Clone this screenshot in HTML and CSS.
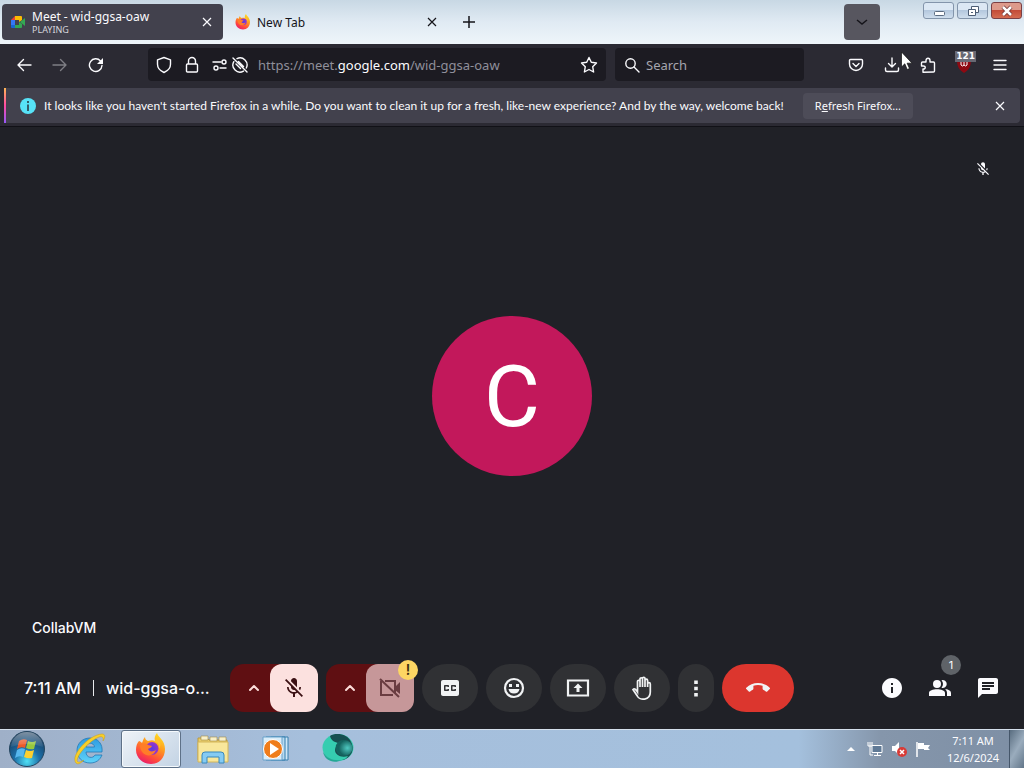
FILE: index.html
```html
<!DOCTYPE html>
<html lang="en">
<head>
<meta charset="utf-8">
<title>Meet - wid-ggsa-oaw</title>
<link rel="stylesheet" href="styles.css">
</head>
<body>
<svg class="defs" aria-hidden="true">
  <defs>
    <linearGradient id="ffo" x1=".8" y1="0" x2=".3" y2="1"><stop offset="0" stop-color="#ffe226"/><stop offset=".4" stop-color="#ff9a1f"/><stop offset=".75" stop-color="#ff4a3c"/><stop offset="1" stop-color="#e81b6d"/></linearGradient>
    <radialGradient id="ffp"><stop offset="0" stop-color="#5a3be0"/><stop offset="1" stop-color="#9a35c8"/></radialGradient>
    <radialGradient id="orb" cx=".5" cy=".85" r=".8"><stop offset="0" stop-color="#4fe0f5"/><stop offset=".45" stop-color="#1c6fa8"/><stop offset="1" stop-color="#173a5c"/></radialGradient>
    <linearGradient id="shine" x2="0" y2="1"><stop offset="0" stop-color="#fff" stop-opacity=".75"/><stop offset="1" stop-color="#fff" stop-opacity=".1"/></linearGradient>
    <linearGradient id="ie" x2="0" y2="1"><stop offset="0" stop-color="#2e9be0"/><stop offset="1" stop-color="#5fd3fa"/></linearGradient>
    <radialGradient id="teal" cx=".7" cy=".5"><stop offset="0" stop-color="#4fc8c0"/><stop offset="1" stop-color="#14635f"/></radialGradient>
    <symbol id="fox" viewBox="0 0 32 32">
      <path d="M4 8c1 0 2 1 3 2 1-2 1-4 3-6 0 2 1 3 3 4 3-1 5-1 7 0-1-3 0-6 2-8 1 4 8 7 8 16 0 9-6 15-14 15S1 25 1 17c0-4 1-7 3-9z" fill="url(#ffo)"/>
      <circle cx="17" cy="15.500" r="6.500" fill="url(#ffp)"/>
      <path d="M5 12c3-2 6-2 8 0l4 1c-1 2-3 2-4 3 1 3 5 3 8 1-2 6-9 7-13 3-2-2-3-5-3-8z" fill="#ff7d28"/>
      <path d="M19 9c4 0 6 3 5 7 3-4 1-10-3-10z" fill="#ffc22c"/>
    </symbol>
    <symbol id="micoff" viewBox="0 0 24 24"><path fill="currentColor" d="M19 11h-1.700c0 .74-.16 1.430-.43 2.050l1.230 1.230c.56-.98.9-2.090.9-3.280zm-4.020.17c0-.06.02-.11.02-.17V5c0-1.660-1.340-3-3-3S9 3.340 9 5v.18l5.980 5.990zM4.270 3L3 4.270l6.010 6.010V11c0 1.660 1.330 3 2.990 3 .22 0 .44-.03.65-.08l1.660 1.660c-.71.33-1.500.52-2.310.52-2.760 0-5.300-2.100-5.300-5.100H5c0 3.410 2.720 6.230 6 6.720V21h2v-3.280c.91-.13 1.770-.45 2.540-.9L19.730 21 21 19.730 4.270 3z"/></symbol>
    <symbol id="close" viewBox="0 0 16 16"><path d="M4 4l8 8M12 4l-8 8" stroke="currentColor" stroke-width="1.200"/></symbol>
  </defs>
</svg>

<header class="titlebar">
  <div class="tab tab-active">
    <svg class="i16" viewBox="0 0 16 16"><path d="M1 6l4-4v4z" fill="#ea4335"/><path d="M1 6h4v5H1z" fill="#3478f6"/><path d="M1 11h4v3H2q-1 0-1-1z" fill="#1967d2"/><path d="M5 2h6q1 0 1 1v3L9 8V6H5z" fill="#fbbc04"/><path d="M5 11h4V8l3 2v3q0 1-1 1H5zM10 8l5-4v8z" fill="#34a853"/></svg>
    <div class="tab-text"><span class="tab-title">Meet - wid-ggsa-oaw</span><span class="tab-sub">PLAYING</span></div>
    <button class="plain" aria-label="Close tab"><svg class="i16"><use href="#close"/></svg></button>
  </div>
  <div class="tab">
    <svg class="i16"><use href="#fox"/></svg>
    <div class="tab-text"><span class="tab-title">New Tab</span></div>
    <button class="plain" aria-label="Close tab"><svg class="i16"><use href="#close"/></svg></button>
  </div>
  <button class="plain new-tab" aria-label="New tab"><svg class="i16" viewBox="0 0 16 16"><path d="M8 2v12M2 8h12" stroke="currentColor" stroke-width="1.500"/></svg></button>
  <button class="all-tabs" aria-label="List all tabs"><svg class="i16" viewBox="0 0 16 16"><path d="M3 6l5 4 5-4" fill="none" stroke="currentColor" stroke-width="1.500"/></svg></button>
  <div class="window-buttons">
    <button class="win" aria-label="Minimize"><svg viewBox="0 0 28 14"><rect x="9.500" y="7.500" width="10" height="4" rx="1" fill="#fff" stroke="#5a6b80"/></svg></button>
    <button class="win" aria-label="Restore"><svg viewBox="0 0 28 14"><path d="M12.500 2.500h7v6h-7z" fill="#fff" stroke="#4d5e75"/><path d="M9.500 5.500h7v6h-7z" fill="#fff" stroke="#4d5e75"/><path d="M12 8h2v1h-2z" fill="#4d5e75"/></svg></button>
    <button class="win win-close" aria-label="Close"><svg viewBox="0 0 28 14"><path d="M10 3l8 8M18 3l-8 8" stroke="#6b3030" stroke-width="4"/><path d="M10 3l8 8M18 3l-8 8" stroke="#fff" stroke-width="2.500"/></svg></button>
  </div>
</header>

<nav class="toolbar">
  <div class="nav-buttons">
    <button class="plain" aria-label="Back"><svg class="i16" viewBox="0 0 16 16"><path d="M15 8H2M7.500 2.500L2 8l5.500 5.500" class="ln"/></svg></button>
    <button class="plain dim" aria-label="Forward"><svg class="i16" viewBox="0 0 16 16"><path d="M1 8h13M8.500 2.500L14 8l-5.500 5.500" class="ln"/></svg></button>
    <button class="plain" aria-label="Reload"><svg class="i16" viewBox="0 0 16 16"><path d="M14 8.500A6.300 6.300 0 1 1 12.500 4" class="ln"/><path d="M15 1v6H9z" fill="currentColor"/></svg></button>
  </div>
  <div class="urlbar">
    <svg class="i18" viewBox="0 0 18 18"><path d="M9 1.500l6.500 2.300v4.500c0 3.500-2.500 6.500-6.500 8.200-4-1.700-6.500-4.700-6.500-8.200V3.800z" class="ln"/></svg>
    <svg class="i18 lock" viewBox="0 0 18 18"><path d="M5.500 8V5a3.500 3.500 0 0 1 7 0v3M4.500 8h9q1 0 1 1v6q0 1-1 1h-9q-1 0-1-1V9q0-1 1-1z" class="ln"/></svg>
    <svg class="i18" viewBox="0 0 18 18"><path d="M2 6h8M9 12h6" class="ln"/><circle cx="13" cy="6" r="2" class="ln"/><circle cx="5" cy="12" r="2" class="ln"/></svg>
    <svg class="i18" viewBox="0 0 18 18"><path d="M2 2l14 14M6 2.600A7 7 0 0 1 15.300 12M12.500 15.100A7 7 0 0 1 2.800 5.700M7.500 5.500l5 5M5 8l4.500 4.500" class="ln"/></svg>
    <a class="url" href="#">https://meet.<b>google.com</b>/wid-ggsa-oaw</a>
    <button class="plain" aria-label="Bookmark"><svg class="i18" viewBox="0 0 18 18"><path d="M9 1.500l2.300 4.800 5.200.7-3.800 3.700.9 5.300L9 13.500 4.400 16l.9-5.300L1.500 7l5.200-.7z" class="ln"/></svg></button>
  </div>
  <div class="searchbar">
    <svg class="i16" viewBox="0 0 16 16"><circle cx="6.500" cy="6.500" r="4.700" class="ln"/><path d="M10 10l5 5" class="ln"/></svg>
    <input type="text" placeholder="Search" aria-label="Search">
  </div>
  <div class="tools">
    <button class="plain" aria-label="Pocket"><svg class="i16" viewBox="0 0 16 16"><path d="M2.500 2.500h11q1 0 1 1V7a6.500 6.500 0 0 1-13 0V3.500q0-1 1-1zM5 6.500l3 3 3-3" class="ln"/></svg></button>
    <button class="plain" aria-label="Downloads"><svg class="i16" viewBox="0 0 16 16"><path d="M8 1v9M4.500 6.500L8 10l3.500-3.500M1.500 11v2q0 1.500 1.500 1.500h10q1.500 0 1.500-1.500v-2" class="ln"/></svg></button>
    <button class="plain" aria-label="Extensions"><svg class="i16" viewBox="0 0 16 16"><path d="M3 15.200V12c3 .5 3-3.500 0-3H1.500V6q0-1 1-1H6V3.500c0-3 4-3 4 0V5h3.500q1 0 1 1v8q0 1-1 1z" class="ln"/></svg></button>
    <button class="plain" aria-label="uBlock Origin, 121 blocked"><svg class="i16" viewBox="0 0 16 16"><path d="M8 0l7 3c0 6-2 10-7 13C3 13 1 9 1 3z" fill="#8e0912"/><path d="M5 5v3q1.500 2 3 0 1.500 2 3 0V5M8 5v3" fill="none" stroke="#fff"/></svg><span class="count">121</span></button>
    <button class="plain" aria-label="Menu"><svg class="i16" viewBox="0 0 16 16"><path d="M2 3.500h12M2 8h12M2 12.500h12" class="ln"/></svg></button>
  </div>
  <svg class="cursor" viewBox="0 0 12 19"><path d="M.5 1v15l3.300-3.200L6.200 18.500l2.300-1-2.400-5.300H11z" fill="#fff" stroke="#111" stroke-width=".7"/></svg>
</nav>

<aside class="notice-wrap">
  <div class="notice">
    <svg class="i16" viewBox="0 0 16 16"><circle cx="8" cy="8" r="8" fill="#57e2f7"/><path d="M7 3h2v2H7zM7 6.500h2V13H7z" fill="#315b69"/></svg>
    <p>It looks like you haven't started Firefox in a while. Do you want to clean it up for a fresh, like-new experience? And by the way, welcome back!</p>
    <button class="refresh">R<u>e</u>fresh Firefox…</button>
    <button class="plain notice-close" aria-label="Dismiss"><svg class="i16"><use href="#close"/></svg></button>
  </div>
</aside>

<main class="meet">
  <section class="stage">
    <div class="avatar">C</div>
    <svg class="muted"><use href="#micoff"/></svg>
    <span class="name">CollabVM</span>
  </section>
  <footer class="controls">
    <div class="meeting"><span>7:11 AM</span><span class="code">wid-ggsa-o...</span></div>
    <div class="buttons">
      <div class="split">
        <button class="more-opts" aria-label="Audio settings"><svg class="i16" viewBox="0 0 16 16"><path d="M4 10l4-4 4 4" class="ln bold"/></svg></button>
        <button class="device" aria-label="Turn on microphone"><svg class="i24"><use href="#micoff"/></svg></button>
      </div>
      <div class="split">
        <button class="more-opts" aria-label="Video settings"><svg class="i16" viewBox="0 0 16 16"><path d="M4 10l4-4 4 4" class="ln bold"/></svg></button>
        <button class="device device-off" aria-label="Camera unavailable"><svg class="i24" viewBox="0 0 24 24"><path d="M7 5h10v12M15 19H3V5M2 3l19 18" fill="none" stroke="currentColor" stroke-width="2"/><path d="M17 11l5-5v12l-5-4z" fill="currentColor"/></svg><span class="warn">!</span></button>
      </div>
      <button class="round" aria-label="Captions"><svg class="i24" viewBox="0 0 24 24"><path fill="currentColor" d="M19 4H5c-1.110 0-2 .9-2 2v12c0 1.100.89 2 2 2h14c1.100 0 2-.9 2-2V6c0-1.100-.9-2-2-2zm-8 7H9.500v-.5h-2v3h2V13H11v1c0 .55-.45 1-1 1H7c-.55 0-1-.45-1-1v-4c0-.55.45-1 1-1h3c.55 0 1 .45 1 1v1zm7 0h-1.500v-.5h-2v3h2V13H18v1c0 .55-.45 1-1 1h-3c-.55 0-1-.45-1-1v-4c0-.55.45-1 1-1h3c.55 0 1 .45 1 1v1z"/></svg></button>
      <button class="round" aria-label="Reactions"><svg class="i24" viewBox="0 0 24 24"><circle cx="12" cy="12" r="9" fill="none" stroke="currentColor" stroke-width="2.200"/><path d="M7 8h3v3H7zM14 8h3v3h-3zM6.500 13h11a5.600 5.600 0 0 1-11 0z" fill="currentColor"/></svg></button>
      <button class="round" aria-label="Present now"><svg class="i24" viewBox="0 0 24 24"><path d="M2 4.500h20v15H2z" fill="none" stroke="currentColor" stroke-width="2.200"/><path d="M12 7.500l4.500 4.500H13.500v4h-3v-4h-3z" fill="currentColor"/></svg></button>
      <button class="round" aria-label="Raise hand"><svg class="i24" viewBox="0 0 24 24"><path d="M7.500 13V5.500a1.200 1.200 0 0 1 2.500 0V11V3a1.200 1.200 0 0 1 2.500 0v8V2.500a1.200 1.200 0 0 1 2.500 0V11V4.500a1.200 1.200 0 0 1 2.600 0V11V8a1.200 1.200 0 0 1 2.700 0v8c0 9-11 8.500-13 4L3 13.500c1.500-1.500 3 0 4.500 2.500z" fill="none" stroke="currentColor" stroke-width="1.700"/></svg></button>
      <button class="round slim" aria-label="More options"><svg class="i24" viewBox="0 0 24 24"><path d="M10.200 4.500h3.600v3.600h-3.600zM10.200 10.700h3.600v3.600h-3.600zM10.200 16.900h3.600v3.600h-3.600z" fill="currentColor"/></svg></button>
      <button class="round leave" aria-label="Leave call"><svg class="i24" viewBox="0 0 24 24"><path fill="currentColor" d="M12 9c-1.600 0-3.150.25-4.600.72v3.100c0 .39-.23.74-.56.9-.98.49-1.870 1.120-2.660 1.850-.18.18-.43.28-.7.28-.28 0-.53-.11-.71-.29L.29 13.080c-.18-.17-.29-.42-.29-.7 0-.28.11-.53.29-.71C3.340 8.780 7.460 7 12 7s8.660 1.780 11.710 4.670c.18.18.29.43.29.71 0 .28-.11.53-.29.71l-2.480 2.480c-.18.18-.43.29-.71.29-.27 0-.52-.11-.7-.28-.79-.74-1.690-1.360-2.670-1.850-.33-.16-.56-.5-.56-.9v-3.100C15.150 9.250 13.600 9 12 9z"/></svg></button>
    </div>
    <div class="side">
      <button class="plain" aria-label="Meeting details"><svg class="i24" viewBox="0 0 24 24"><path fill="currentColor" d="M12 2C6.480 2 2 6.480 2 12s4.480 10 10 10 10-4.480 10-10S17.520 2 12 2zm1 15h-2v-6h2v6zm0-8h-2V7h2v2z"/></svg></button>
      <button class="plain" aria-label="People"><svg class="i24" viewBox="0 0 24 24"><g fill="currentColor"><circle cx="9" cy="8" r="4"/><path d="M1 20v-3c0-5 16-5 16 0v3zM13.500 4.200a4 4 0 1 1 0 7.600c2-2 2-5.600 0-7.600zM17 13c4 .5 6 2 6 4v3h-4v-3c0-1.600-.8-3-2-4z"/></g></svg><span class="badge">1</span></button>
      <button class="plain" aria-label="Chat"><svg class="i24" viewBox="0 0 24 24"><path fill="currentColor" d="M20 2H4c-1.100 0-1.990.9-1.990 2L2 22l4-4h14c1.100 0 2-.9 2-2V4c0-1.100-.9-2-2-2zM6 9h12v2H6V9zm8 5H6v-2h8v2zm4-6H6V6h12v2z"/></svg></button>
    </div>
  </footer>
</main>

<div class="taskbar">
  <button class="start" aria-label="Start"><svg viewBox="0 0 38 38"><circle cx="19" cy="19" r="17.500" fill="url(#orb)" stroke="#24455f"/><path d="M11 11q4-3 8-1l-2 8q-4-2-8 1z" fill="#ec5a2a"/><path d="M20 11q4 2 8 0l-2 8q-4 1-8-1z" fill="#96c83d"/><path d="M9 20q4-3 8-1l-2 8q-4-2-8 1z" fill="#56b7ee"/><path d="M18 20q4 2 8 0l-2 8q-4 1-8-1z" fill="#fdd02f"/><path d="M3 17a16 15 0 0 1 32 0q-16-6-32 0z" fill="url(#shine)" opacity=".6"/></svg></button>
  <div class="apps">
    <button class="app" aria-label="Internet Explorer"><svg viewBox="0 0 34 34"><path d="M30 20H14c0 6 7 7 9 3h7c-2 5-6 8-12 8C10 31 5 25 5 18.500S10 6 18 6s13 6 12 14zM14 15h8.500c-.5-5-8-5-8.500 0z" fill="url(#ie)" stroke="#2378b5" stroke-width=".8"/><path d="M4 31C-2 24 16 3 30 2c4 0 3 4 1 7 1-4-1-5-4-4C17 9 5 23 5 29c1 2 4 1 7-1-3 3-6 5-8 3z" fill="#f8cf29" stroke="#c99a16" stroke-width=".5"/></svg></button>
    <button class="app app-active" aria-label="Firefox"><svg viewBox="0 0 34 34"><use href="#fox" x="1" y="1" width="32" height="32"/></svg></button>
    <button class="app" aria-label="Windows Explorer"><svg viewBox="0 0 34 34"><path d="M2 6h9l2 2h18v20H2z" fill="#e9cc69" stroke="#bb9b3e"/><path d="M5 4h7v4H5zM14 5h7v4h-7zM23 5h7v4h-7z" fill="#f8f0c8" stroke="#a08b4a" stroke-width=".6"/><path d="M2 10h30v20H2z" fill="#f8e79b" stroke="#d3b65b"/><path d="M6 31v-8q0-3 3-3h16q3 0 3 3v8h-5v-6H11v6z" fill="#85cbf3" stroke="#3888bd"/></svg></button>
    <button class="app" aria-label="Windows Media Player"><svg viewBox="0 0 34 34"><path d="M13 5h17v23H13z" fill="#cfe7f7" stroke="#357eae"/><path d="M8 5h19v23H8z" fill="#b8d9ef" stroke="#357eae"/><path d="M5 5h19v23H5z" fill="#d9edf9" stroke="#6aa3cb"/><circle cx="15" cy="17" r="9.500" fill="#ef7d1b" stroke="#fff"/><path d="M12 11l9 6-9 6z" fill="#fff"/></svg></button>
    <button class="app" aria-label="Browser"><svg viewBox="0 0 34 34"><ellipse cx="18" cy="15.500" rx="15.500" ry="13.500" fill="#35cdb0"/><path d="M10 4c6-4 18-2 21 6 5 9-2 17-9 18 3-1 5-2 6-4-7 2-13-1-13-6 0-3 3-5 3-7-4-1-7-3-8-7z" fill="#174f50"/><ellipse cx="24" cy="16" rx="8.500" ry="8" fill="url(#teal)"/><path d="M3 20c4 6 9 9 19 8-8 4-17 1-19-8z" fill="#23a895"/></svg></button>
  </div>
  <div class="tray">
    <svg class="i16" viewBox="0 0 16 16"><path d="M4 10l4-4 4 4z" fill="#fff"/></svg>
    <svg class="i16" viewBox="0 0 16 16"><path d="M5 4.500h10v7H5z" fill="#607a96" stroke="#fff"/><path d="M7 14.500h7M10.500 12v2M1 1v4h4V1M3 1v13h3" fill="none" stroke="#fff"/></svg>
    <svg class="i16" viewBox="0 0 16 16"><path d="M1 5h3l4-4v13l-4-4H1z" fill="#fff"/><circle cx="11" cy="11" r="5" fill="#d83b36"/><path d="M9 9l4 4M13 9l-4 4" stroke="#fff" stroke-width="1.500"/></svg>
    <svg class="i16" viewBox="0 0 16 16"><path d="M2 1v15" stroke="#fff" stroke-width="1.500"/><path d="M3 2h6v2h6l-2 3 2 2H9V8H3z" fill="#fff"/></svg>
    <div class="clock"><span>7:11 AM</span><span>12/6/2024</span></div>
  </div>
  <button class="show-desktop" aria-label="Show desktop"></button>
</div>
</body>
</html>
```
FILE: styles.css
```css
* { box-sizing: border-box; }
body {
  margin: 0;
  height: 100vh;
  display: flex;
  flex-direction: column;
  overflow: hidden;
  background: #202127;
  color: #fbfbfe;
  font: 12px/16px "Noto Sans", "Open Sans", sans-serif;
}
button, input { font: inherit; color: inherit; }
button { border: 0; padding: 0; margin: 0; display: flex; align-items: center; justify-content: center; flex: none; }
svg { display: block; flex: none; }
.defs { position: absolute; width: 0; height: 0; }
.plain { background: none; position: relative; }
.i16 { width: 16px; height: 16px; }
.i18 { width: 18px; height: 18px; }
.i24 { width: 24px; height: 24px; }
.ln { fill: none; stroke: currentColor; stroke-width: 1.4; stroke-linecap: round; stroke-linejoin: round; }
.bold { stroke-width: 2; }

.titlebar {
  flex: none;
  height: 44px;
  padding: 0 2px;
  display: flex;
  align-items: center;
  background: linear-gradient(#c8d8e4, #e0eaf3 50%, #eef5fa);
  color: #15141a;
}
.tab { width: 221px; height: 36px; padding: 0 8px; display: flex; align-items: center; gap: 6px; border-radius: 4px; }
.tab + .tab { margin-left: 4px; }
.tab-active { background: #42414d; color: #fbfbfe; }
.tab-text { flex: 1; display: flex; flex-direction: column; padding-top: 2px; }
.tab-title { font-size: 12px; line-height: 14px; }
.tab-sub { font-size: 9px; line-height: 12px; color: #d6d6dc; }
.new-tab { width: 42px; height: 36px; }
.all-tabs { width: 36px; height: 36px; margin-left: auto; border-radius: 4px; background: #57565f; color: #15141a; }
.window-buttons { display: flex; gap: 3px; align-self: flex-start; margin: 2px 0 0 43px; }
.win { width: 31px; height: 17px; border: 1px solid #8395ab; border-radius: 3px; background: linear-gradient(#dce8f4 45%, #b4c8de 50%, #cfdeed); }
.win svg { width: 28px; height: 14px; }
.win-close { border-color: #7b4044; background: linear-gradient(#dd9a8b 45%, #c34c38 50%, #d46b50); }

.toolbar { flex: none; height: 44px; padding: 4px 12px 7px 16px; display: flex; align-items: center; background: #2b2a33; position: relative; }
.nav-buttons { display: flex; gap: 20px; width: 132px; }
.dim { opacity: .4; }
.urlbar, .searchbar { height: 33px; background: #1c1b22; border-radius: 4px; display: flex; align-items: center; }
.urlbar { flex: 1; padding: 0 8px 0 7px; gap: 2px; margin-right: 9px; }
.lock { margin: 0 8px; }
.url { flex: 1; margin-left: 7px; color: #8f8f9a; font-size: 13px; text-decoration: none; }
.url b { font-weight: 400; color: #fbfbfe; }
.searchbar { width: 189px; padding: 0 9px; gap: 6px; }
.searchbar input { width: 100%; min-width: 0; border: 0; padding: 0; background: none; outline: 0; font-size: 13px; }
.searchbar input::placeholder { color: #a5a5ae; opacity: 1; }
.tools { display: flex; gap: 20px; padding: 0 4px 0 44px; }
.count { position: absolute; right: -4px; top: -6px; padding: 0 1px; background: #686873; font: 700 9px/11px "DejaVu Sans", sans-serif; }
.cursor { position: absolute; right: 111px; top: 7px; width: 12px; height: 19px; }

.notice-wrap { flex: none; height: 39px; padding: 0 4px 4px; background: #2b2a33; border-bottom: 1px solid #111117; }
.notice { height: 35px; padding: 0 12px 0 14px; display: flex; align-items: center; background: #42414d; border-radius: 0 4px 4px 0; border-left: 2px solid; border-image: linear-gradient(#ffbd4f, #ff4aa2 50%, #9059ff) 1; }
.notice p { margin: 0 0 0 8px; font: 12px/16px "Lato", sans-serif; white-space: nowrap; }
.refresh { margin-left: 19px; height: 26px; padding: 0 12px; border-radius: 4px; background: #4d4c58; font-size: 11px; }
.notice-close { margin-left: auto; }

.meet { flex: 1; min-height: 0; display: flex; flex-direction: column; font-family: "Inter", "Roboto", sans-serif; }
.stage { flex: 1; position: relative; display: grid; place-items: center; padding-top: 16px; }
.avatar { width: 160px; height: 160px; border-radius: 50%; background: #c2185b; color: #fff; display: grid; place-items: center; font: 86px/162px "Roboto", sans-serif; }
.muted { position: absolute; top: 34px; right: 33px; width: 16px; height: 16px; }
.name { position: absolute; left: 32px; bottom: 12px; font-size: 14px; font-weight: 500; line-height: 16px; }
.controls { flex: none; height: 81px; padding-bottom: 1px; display: grid; grid-template-columns: 1fr auto 1fr; align-items: center; }
.meeting { display: flex; align-items: center; padding-left: 24px; font-size: 16px; font-weight: 500; white-space: nowrap; }
.code { margin-left: 12px; padding-left: 12px; border-left: 1px solid #e8eaed; }
.buttons { display: flex; gap: 8px; }
.split { display: flex; border-radius: 14px; background: #5f0f12; }
.more-opts { width: 40px; height: 48px; padding-left: 8px; background: none; color: #fcdcd9; }
.device { position: relative; width: 48px; height: 48px; border-radius: 12px; background: #fce1df; color: #3c1114; }
.device-off { background: #c69799; color: #6a3d41; }
.warn { position: absolute; top: -4px; right: -4px; width: 20px; height: 20px; border-radius: 50%; background: #fdd663; color: #3c3010; font-size: 14px; font-weight: 600; line-height: 20px; text-align: center; }
.round { width: 56px; height: 48px; border-radius: 24px; background: #303134; color: #f1f3f4; }
.slim { width: 36px; border-radius: 18px; }
.leave { width: 72px; background: #dc362e; }
.side { display: flex; justify-content: flex-end; padding-right: 12px; }
.side button { width: 48px; height: 48px; }
.badge { position: absolute; top: -9px; right: 3px; width: 20px; height: 20px; border-radius: 50%; background: #5f6368; font-size: 11px; line-height: 20px; text-align: center; }

.taskbar { flex: none; height: 39px; display: flex; align-items: center; background: linear-gradient(90deg, #9fb0c8, #a6bfdc 30%, #a4c0dd 78%, #8596ab 86%, #7e8fa5); border-top: 1px solid #d5e0ec; }
.start { width: 59px; height: 38px; padding-right: 5px; background: none; }
.start svg { width: 38px; height: 38px; }
.apps { display: flex; gap: 2px; flex: 1; }
.app { width: 60px; height: 38px; border: 1px solid transparent; border-radius: 3px; background: none; }
.app svg { width: 34px; height: 34px; }
.app-active { background: linear-gradient(135deg, #eef3f8, #c3d3e4); border-color: #5e7188; box-shadow: inset 0 0 0 1px #f5f9fc; }
.tray { display: flex; align-items: center; gap: 8px; }
.clock { display: flex; flex-direction: column; width: 68px; text-align: center; font-size: 11px; line-height: 17px; }
.show-desktop { width: 15px; height: 38px; margin-left: 2px; border-left: 1px solid #45566a; background: linear-gradient(120deg, #596d80, #9aacbd 50%, #627689); }
```
